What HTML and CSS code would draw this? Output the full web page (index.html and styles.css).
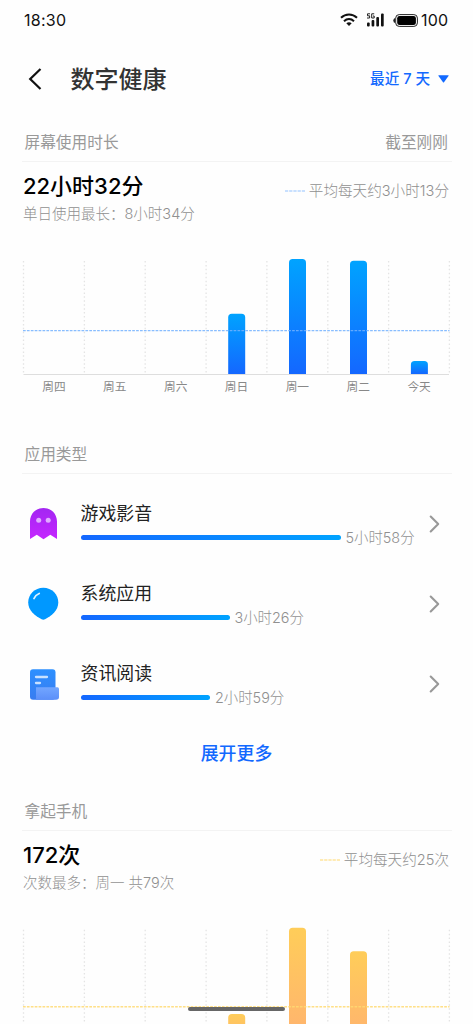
FILE: index.html
```html
<!DOCTYPE html>
<html lang="zh-CN">
<head>
<meta charset="utf-8">
<title>数字健康</title>
<link rel="stylesheet" href="styles.css">
</head>
<body>
<div class="phone">
  <div class="status">
    <span class="clock">18:30</span>
    <div class="status-icons">
      <svg class="wifi" width="18" height="14" viewBox="0 0 18 14" fill="none" stroke="#111" stroke-width="2"><path d="M1 4.800C5.500.5 12.500.5 17 4.800"/><path d="M4 8.200C7 5.400 11 5.400 14 8.200"/><path d="M6.300 10.300Q9 8.300 11.700 10.300L9 13Z" fill="#111" stroke="none"/></svg>
      <svg class="signal" width="19" height="14" viewBox="0 0 19 14"><g fill="none" stroke="#222" stroke-width="1"><path d="M4 .8H1.500V2.800H3.600V5H1"/><path d="M8.200 .8H5.700V5H8.200V3H7"/></g><g fill="#111"><rect x="1" y="9.500" width="2.700" height="4" rx="1"/><rect x="5.600" y="7" width="2.700" height="6.500" rx="1"/><rect x="10.300" y="4" width="2.700" height="9.500" rx="1"/><rect x="15" y="0.500" width="2.700" height="13" rx="1"/></g></svg>
      <svg class="battery" width="25" height="13" viewBox="0 0 25 13"><path d="M2 4Q.3 4.500.3 6.500T2 9Z" fill="#222"/><rect x="2.700" y=".6" width="21.700" height="11.800" rx="3.500" fill="#fff" stroke="#222" stroke-width="1"/><rect x="4.200" y="2" width="18.700" height="9" rx="2.300" fill="#000"/></svg>
      <span class="level">100</span>
    </div>
  </div>

  <header class="header">
    <svg class="back" width="14" height="24" viewBox="0 0 14 24" fill="none" stroke="#111" stroke-width="2.200"><path d="M12.500 2L2.200 12L12.500 22"/></svg>
    <h1>数字健康</h1>
    <div class="range">最近 7 天<svg width="11" height="8" viewBox="0 0 11 8"><path d="M.8.300H10.200Q11 .4 10.500 1.100L6 7.200Q5.500 7.800 5 7.200L.5 1.100Q0 .4.800.300Z" fill="#1269ff"/></svg></div>
  </header>

  <section class="usage">
    <div class="section-head"><h2>屏幕使用时长</h2><span>截至刚刚</span></div>
    <div class="summary">
      <div><div class="total">22小时32分</div><div class="note">单日使用最长：8小时34分</div></div>
      <div class="legend"><svg width="20" height="2"><path d="M0 1H20" stroke="#91c1ff" stroke-width="1.200" stroke-dasharray="3.200 1"/></svg>平均每天约3小时13分</div>
    </div>
    <svg class="chart" width="473" height="120" viewBox="0 256 473 120">
      <defs><linearGradient id="blue" x1="0" y1="0" x2="0" y2="1"><stop stop-color="#00a3ff"/><stop offset="1" stop-color="#1467ff"/></linearGradient></defs>
      <path d="M23.500 261V374M84.400 261V374M145.200 261V374M206.100 261V374M266.900 261V374M327.800 261V374M388.600 261V374M449.400 261V374" stroke="#e4e4e4" stroke-width="1.300" stroke-dasharray="1.500 2.430"/>
      <path d="M23.500 374.500H449" stroke="#dedede"/>
      <g fill="url(#blue)">
        <path d="M228.200 374V317.500q0-3.700 3.700-3.700h9.600q3.700 0 3.700 3.700V374Z"/>
        <path d="M289 374V262.800q0-3.700 3.700-3.700h9.600q3.700 0 3.700 3.700V374Z"/>
        <path d="M350 374V264.500q0-3.700 3.700-3.700h9.600q3.700 0 3.700 3.700V374Z"/>
        <path d="M410.900 374V364.700q0-3.700 3.700-3.700h9.600q3.700 0 3.700 3.700V374Z"/>
      </g>
      <path d="M23 330.700H449.500" stroke="#73b1ff" stroke-opacity=".85" stroke-width="1.200" stroke-dasharray="2.700 1.200"/>
    </svg>
    <div class="days"><span>周四</span><span>周五</span><span>周六</span><span>周日</span><span>周一</span><span>周二</span><span>今天</span></div>
  </section>

  <section class="types">
    <div class="section-head"><h2>应用类型</h2></div>
    <div class="app">
      <svg class="app-icon" width="32" height="34" viewBox="27 506 32 34"><defs><linearGradient id="ghost" x1="0" y1="0" x2="0" y2="1"><stop stop-color="#a326f2"/><stop offset="1" stop-color="#c526ff"/></linearGradient></defs><path d="M30 521.500C30 513.800 35.800 508 43.500 508S57 513.800 57 521.500V539L50.300 534.700L43.500 539.200L36.800 534.700L30 539Z" fill="url(#ghost)"/><circle cx="38.700" cy="520.300" r="2.500" fill="#e0adff"/><circle cx="48.200" cy="520.300" r="2.500" fill="#e0adff"/></svg>
      <div class="app-body"><div class="app-name">游戏影音</div><div class="usage-line"><i class="bar" style="width:260px"></i><span>5小时58分</span></div></div>
      <svg class="chevron" width="12" height="18" viewBox="0 0 12 18"><path d="M1.700 1.500L9.200 9L1.700 16.500"/></svg>
    </div>
    <div class="app">
      <svg class="app-icon" width="32" height="34" viewBox="27 586 32 34"><path d="M28.200 602.500C28.200 594.200 34.800 587.800 43.300 587.800S58.300 594.200 58.300 602.500C58.300 610.500 51.800 615.500 45 619.300Q43.300 620.200 41.600 619.300C34.800 615.500 28.200 610.500 28.200 602.500Z" fill="#0098ff"/><path d="M34 598.500Q35.500 595 39.200 593.500" fill="none" stroke="#dff3ff" stroke-width="1.800" stroke-linecap="round"/></svg>
      <div class="app-body"><div class="app-name">系统应用</div><div class="usage-line"><i class="bar" style="width:149px"></i><span>3小时26分</span></div></div>
      <svg class="chevron" width="12" height="18" viewBox="0 0 12 18"><path d="M1.700 1.500L9.200 9L1.700 16.500"/></svg>
    </div>
    <div class="app">
      <svg class="app-icon" width="32" height="34" viewBox="27 666 32 34"><defs><linearGradient id="doc" x1="0" y1="0" x2="0" y2="1"><stop stop-color="#2d90ff"/><stop offset="1" stop-color="#397cf0"/></linearGradient><linearGradient id="page" x1="0" y1="0" x2="0" y2="1"><stop stop-color="#72a6ff"/><stop offset="1" stop-color="#5c8ff9"/></linearGradient></defs><rect x="30" y="669.300" width="25.500" height="30.500" rx="3" fill="url(#doc)"/><path d="M36 687.300H57.500Q59 687.300 59 689V697Q59 699.800 56 699.800H36Z" fill="url(#page)"/><path d="M36 677H47M36 683H40" stroke="#c9e1ff" stroke-width="2.300" stroke-linecap="round"/></svg>
      <div class="app-body"><div class="app-name">资讯阅读</div><div class="usage-line"><i class="bar" style="width:129.500px"></i><span>2小时59分</span></div></div>
      <svg class="chevron" width="12" height="18" viewBox="0 0 12 18"><path d="M1.700 1.500L9.200 9L1.700 16.500"/></svg>
    </div>
    <div class="more">展开更多</div>
  </section>

  <section class="pickups">
    <div class="section-head"><h2>拿起手机</h2></div>
    <div class="summary">
      <div><div class="total">172次</div><div class="note">次数最多：周一 共79次</div></div>
      <div class="legend"><svg width="20" height="2"><path d="M0 1H20" stroke="#ffd86b" stroke-width="1.200" stroke-dasharray="3.200 1"/></svg>平均每天约25次</div>
    </div>
    <svg class="chart" width="473" height="120" viewBox="0 925 473 120">
      <defs><linearGradient id="gold" x1="0" y1="0" x2="0" y2="1"><stop stop-color="#ffcd59"/><stop offset="1" stop-color="#ffb270"/></linearGradient></defs>
      <path d="M23.500 929.700V1043M84.400 929.700V1043M145.200 929.700V1043M206.100 929.700V1043M266.900 929.700V1043M327.800 929.700V1043M388.600 929.700V1043M449.400 929.700V1043" stroke="#e4e4e4" stroke-width="1.300" stroke-dasharray="1.500 2.430"/>
      <g fill="url(#gold)">
        <path d="M228.200 1043V1017.700q0-3.700 3.700-3.700h9.600q3.700 0 3.700 3.700V1043Z"/>
        <path d="M289 1043V931.400q0-3.700 3.700-3.700h9.600q3.700 0 3.700 3.700V1043Z"/>
        <path d="M350 1043V954.900q0-3.700 3.700-3.700h9.600q3.700 0 3.700 3.700V1043Z"/>
      </g>
      <path d="M23 1006.700H449.500" stroke="#ffdb72" stroke-opacity=".85" stroke-width="1.400" stroke-dasharray="2.700 1.200"/>
    </svg>
  </section>
  <div class="home-bar"></div>
</div>
</body>
</html>
```
FILE: styles.css
```css
* { box-sizing: border-box; }
body { margin: 0; background: #fefefe; font-family: Inter, "Noto Sans CJK SC", sans-serif; }
h1, h2 { margin: 0; font-weight: 400; }
svg { display: block; flex: none; }
.phone { position: relative; width: 473px; height: 1024px; overflow: hidden; background: #fefefe; }
.status { height: 40px; padding: 0 24px; display: flex; justify-content: space-between; align-items: center; color: #111; }
.clock { font-size: 16px; line-height: 20px; letter-spacing: .25px; }
.status-icons { display: flex; align-items: center; }
.signal { margin-left: 8px; }
.battery { margin-left: 8px; }
.level { width: 28px; margin-left: 3px; font-size: 16px; line-height: 20px; letter-spacing: .2px; }
.header { height: 77px; padding: 0 24px 0 28px; display: flex; align-items: center; }
.header h1 { margin-left: 28.500px; padding-top: 2px; font-size: 24px; line-height: 36px; font-weight: 500; color: #333; }
.range { margin-left: auto; display: flex; align-items: center; gap: 8px; color: #1269ff; font-size: 14.600px; line-height: 20px; font-weight: 500; }
.section-head { height: 45px; margin: 0 21px 0 22px; padding: 7px 4px 0 2.500px; border-bottom: 1px solid #f3f3f3; display: flex; align-items: center; justify-content: space-between; color: #999; font-size: 15.700px; line-height: 24px; }
.section-head h2 { font-size: inherit; }
.summary { height: 94px; padding: 9px 24px 0 23px; display: flex; justify-content: space-between; }
.total { color: #000; font-size: 22px; line-height: 30px; font-weight: 500; }
.note { padding-top: 1px; color: #909090; font-size: 14.500px; line-height: 24px; font-weight: 300; }
.legend { height: 24px; margin-top: 8px; display: flex; align-items: center; gap: 4px; color: #909090; font-size: 14.600px; line-height: 24px; font-weight: 300; }
.days { width: 426px; margin-left: 23.500px; padding-top: 1px; display: grid; grid-template-columns: repeat(7, 1fr); text-align: center; color: #888; font-size: 11.700px; line-height: 20px; }
.types { margin-top: 32px; }
.types .section-head { margin-bottom: 10px; }
.app { height: 80px; padding: 0 32px 0 27px; display: flex; align-items: center; }
.app-icon { margin-top: -3px; }
.app-body { flex: 1; margin-left: 21.500px; }
.app-name { height: 27px; padding-top: 1px; color: #222; font-size: 17.900px; line-height: 27px; }
.usage-line { height: 24px; display: flex; align-items: center; gap: 5px; color: #909090; font-size: 14.400px; line-height: 24px; font-weight: 300; }
.bar { height: 5px; border-radius: 3px; background: linear-gradient(90deg, #1467ff, #00a3ff); }
.chevron { fill: none; stroke: #999; stroke-width: 2.100; stroke-linecap: round; stroke-linejoin: round; }
.more { height: 28px; margin-top: 16px; text-align: center; color: #1269ff; font-size: 17.900px; line-height: 28px; font-weight: 500; }
.pickups { margin-top: 18px; }
.home-bar { position: absolute; left: 188px; top: 1007px; width: 97px; height: 3.500px; border-radius: 2px; background: #666; }
```
